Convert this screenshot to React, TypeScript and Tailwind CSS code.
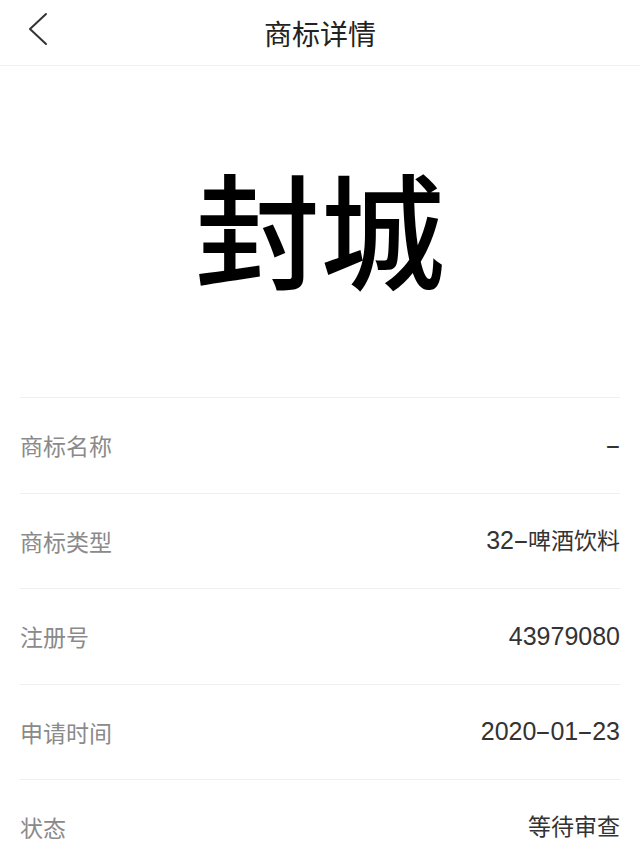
const rows = [
  { label: '商标名称', value: '-' },
  { label: '商标类型', value: '32-啤酒饮料' },
  { label: '注册号', value: '43979080' },
  { label: '申请时间', value: '2020-01-23' },
  { label: '状态', value: '等待审查' },
];

// digits and dashes look like a Helvetica-ish latin face in the shot
function Value({ text }: { text: string }) {
  return (
    <span className="font-['Liberation_Sans','Noto_Sans_CJK_SC',sans-serif] text-[#333]">
      {text.split(/([0-9]+|-)/).filter(Boolean).map((part, i) => {
        if (part === '-')
          return (
            <span key={i} className="inline-block w-[14px] scale-x-[1.9] text-center text-[25px]">
              -
            </span>
          );
        if (/^[0-9]+$/.test(part)) return <span key={i} className="text-[25px]">{part}</span>;
        return <span key={i}>{part}</span>;
      })}
    </span>
  );
}

export default function App() {
  return (
    <div className="min-h-[857px] w-full bg-white font-['Noto_Sans_CJK_SC','Noto_Sans',sans-serif] text-[#222]">
      <header className="relative flex h-[66px] items-center justify-center border-b border-[#f0f0f0]">
        <button className="absolute left-[24px] top-[12px] text-[#333]">
          <svg width="26" height="34" viewBox="0 0 26 34" fill="none">
            <polyline points="22,2 6,17 22,32" stroke="currentColor" strokeWidth="2" strokeLinecap="round" strokeLinejoin="round" />
          </svg>
        </button>
        <h1 className="text-[28px] text-[#222]">商标详情</h1>
      </header>

      <section className="flex h-[331px] items-center justify-center pb-[12px]">
        <div className="text-[125px] leading-none font-medium text-black">封城</div>
      </section>

      <div className="px-[20px]">
        {rows.map((row) => (
          <div
            key={row.label}
            className="flex h-[95.5px] items-center justify-between border-t border-[#efefef] text-[23px]"
          >
            <span className="text-[#8a8a8a]">{row.label}</span>
            <Value text={row.value} />
          </div>
        ))}
      </div>
    </div>
  );
}
